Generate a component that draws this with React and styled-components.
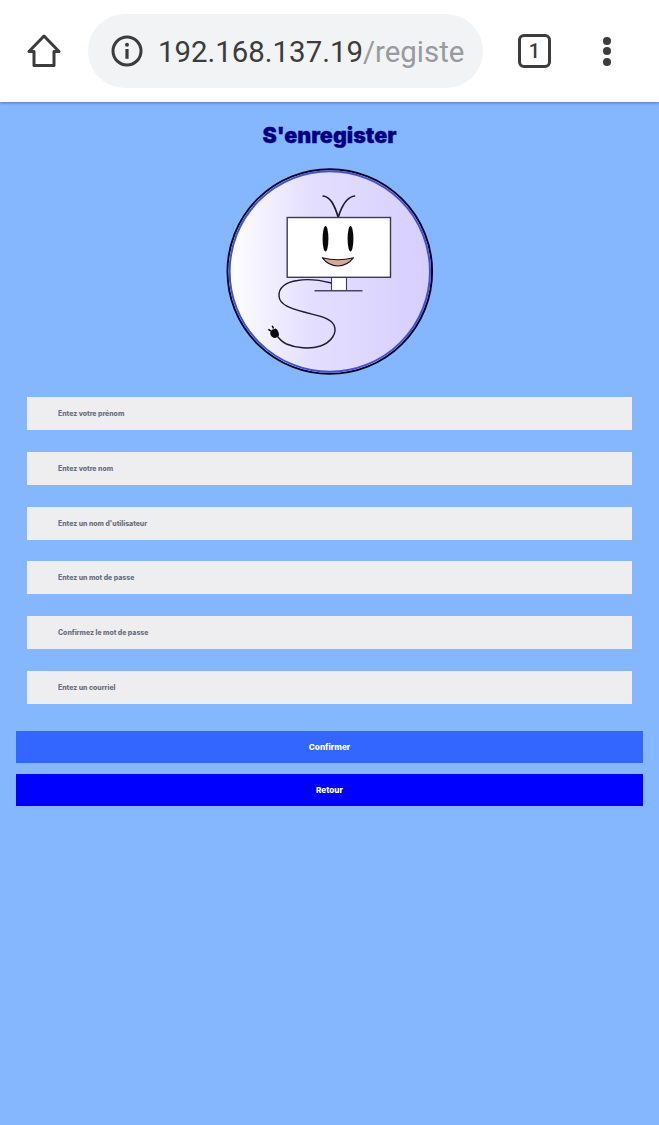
import styled, { createGlobalStyle } from 'styled-components';

const GlobalStyle = createGlobalStyle`
  html, body {
    margin: 0;
    padding: 0;
    background: #84b7ff;
  }
  * {
    box-sizing: border-box;
  }
`;

const fields = [
  "Entez votre prénom",
  'Entez votre nom',
  "Entez un nom d'utilisateur",
  'Entez un mot de passe',
  'Confirmez le mot de passe',
  'Entez un courriel',
];

const Logo = () => (
  <LogoSvg viewBox="10.5 8 208 208" aria-label="logo">
    <defs>
      <linearGradient id="disc" x1="0" y1="0" x2="1" y2="0">
        <stop offset="0" stopColor="#ffffff" />
        <stop offset="0.4" stopColor="#e4dfff" />
        <stop offset="1" stopColor="#d6ceff" />
      </linearGradient>
    </defs>
    <circle cx="114.3" cy="111.5" r="102.300" fill="url(#disc)" stroke="#05051e" strokeWidth="2" />
    <circle cx="114.3" cy="111.5" r="100.200" fill="none" stroke="#3d52d5" strokeWidth="2" />
    <path d="M107.700 36c7 1 11 8 15 21.300c4-13 9-20.300 16.300-21.300" fill="none" stroke="#1a1a2a" strokeWidth="1.700" strokeLinecap="round" />
    <rect x="71.700" y="57.500" width="103.300" height="59.800" fill="#fff" stroke="#3e3a55" strokeWidth="1.400" />
    <rect x="116" y="117.500" width="15" height="13" fill="#fff" stroke="#3e3a55" strokeWidth="1.100" />
    <path d="M99 130.700h48" stroke="#4a4668" strokeWidth="1.600" />
    <ellipse cx="110" cy="78.700" rx="2.900" ry="12.800" fill="#08080c" />
    <ellipse cx="135" cy="78.700" rx="2.900" ry="12.800" fill="#08080c" />
    <path d="M106.700 97.700c10 2.600 21.300 2.600 31.300 0c-4 5.300-9.500 8.300-15.600 8.300s-11.700-3-15.700-8.300z" fill="#d9a894" stroke="#14141c" strokeWidth="1.100" strokeLinejoin="round" />
    <path d="M116 123C104 120 90 119 82 120.500C70 122 63 128 63.500 136C64 146 78 149 92 153C104 156 115 158 118.500 165C122 173 116 182 105 186C94 189.500 80 188 71 184C66 181.500 63 178 61 175" fill="none" stroke="#1c1a2c" strokeWidth="1.400" />
    <path d="M63.500 175.500l-3 2.300c-2.500 .5-4.500-.8-5.500-3c-.8-2 .2-3.800 1.500-5l3.500-1.300c2.300 1 3.500 3.700 3.500 7z" fill="#08080c" />
    <path d="M55.500 171l-2.700-1.700M58 168.500l-1.300-2.800" stroke="#08080c" strokeWidth="1.500" />
  </LogoSvg>
);

const App = () => (
  <Page>
    <GlobalStyle />
    <Toolbar>
      <HomeIcon viewBox="0 0 34 34">
        <path d="M17 2L2 17.500h5v14h20v-14h5z" fill="none" stroke="#3c3c3e" strokeWidth="3" strokeLinejoin="round" />
      </HomeIcon>
      <AddressPill>
        <InfoIcon viewBox="0 0 32 32">
          <circle cx="16" cy="16" r="14" fill="none" stroke="#3c3c3e" strokeWidth="3" />
          <circle cx="16" cy="9.800" r="2" fill="#3c3c3e" />
          <rect x="14.400" y="14" width="3.200" height="9.800" fill="#3c3c3e" />
        </InfoIcon>
        <Url>
          192.168.137.19<UrlPath>/registe</UrlPath>
        </Url>
      </AddressPill>
      <TabCount>1</TabCount>
      <MenuDots>
        <span />
        <span />
        <span />
      </MenuDots>
    </Toolbar>
    <Main>
      <Title>S'enregister</Title>
      <Logo />
      <Form>
        {fields.map((label) => (
          <Field key={label} type="text" placeholder={label} />
        ))}
        <Buttons>
          <Button type="button" $color="#3366ff">Confirmer</Button>
          <Button type="button" $color="#0000ff">Retour</Button>
        </Buttons>
      </Form>
    </Main>
  </Page>
);

export default App;

const Page = styled.div`
  width: 659px;
  min-height: 1125px;
  background: #84b7ff;
  overflow: hidden;
`;

const Toolbar = styled.header`
  height: 102px;
  background: #fff;
  display: flex;
  align-items: center;
  padding: 0 0 0 27px;
  box-shadow: 0 1px 3px rgba(50, 70, 110, 0.55);
  position: relative;
`;

const HomeIcon = styled.svg`
  width: 34px;
  height: 34px;
  flex: none;
`;

const AddressPill = styled.div`
  width: 395px;
  height: 74px;
  margin-left: 27px;
  background: #f1f3f4;
  border-radius: 37px;
  display: flex;
  align-items: center;
  padding-left: 23px;
`;

const InfoIcon = styled.svg`
  width: 32px;
  height: 32px;
  flex: none;
`;

const Url = styled.div`
  margin-left: 15px;
  padding-top: 2px;
  font-family: Roboto, sans-serif;
  font-size: 29.400px;
  color: #3c3c3e;
  white-space: nowrap;
`;

const UrlPath = styled.span`
  color: #9a9a9e;
`;

const TabCount = styled.div`
  width: 33px;
  height: 34px;
  margin-left: 35px;
  border: 3px solid #3c3c3e;
  border-radius: 6px;
  display: flex;
  align-items: center;
  justify-content: center;
  font-family: Roboto, sans-serif;
  font-size: 20px;
  font-weight: 500;
  color: #3c3c3e;
`;

const MenuDots = styled.div`
  margin-left: 52px;
  display: flex;
  flex-direction: column;
  gap: 2.500px;
  span {
    width: 8px;
    height: 8px;
    border-radius: 50%;
    background: #3c3c3e;
  }
`;

const Main = styled.main`
  display: flex;
  flex-direction: column;
  align-items: center;
`;

const Title = styled.h1`
  margin: 21px 0 0;
  height: 25px;
  line-height: 25px;
  font-family: Inter, sans-serif;
  font-size: 21.500px;
  font-weight: 900;
  color: #00007f;
  -webkit-text-stroke: 0.3px #00007f;
`;

const LogoSvg = styled.svg`
  display: block;
  width: 208px;
  height: 208px;
  margin-top: 20px;
`;

const Form = styled.form`
  width: 100%;
  margin-top: 21px;
  display: flex;
  flex-direction: column;
  align-items: center;
  gap: 21.800px;
`;

const Field = styled.input`
  display: block;
  width: 605px;
  height: 33px;
  padding: 0 0 0 31px;
  border: 0;
  border-radius: 0;
  outline: 0;
  background: #eeeef0;
  font-family: Inter, sans-serif;
  font-size: 6.900px;
  font-weight: 800;
  &::placeholder {
    color: #6b7080;
    opacity: 1;
  }
`;

const Buttons = styled.div`
  width: 627px;
  margin-top: 5.200px;
  display: flex;
  flex-direction: column;
  gap: 11px;
`;

const Button = styled.button`
  height: 32px;
  padding: 0;
  border: 0;
  border-radius: 0;
  background: ${({ $color }) => $color};
  color: #fff;
  font-family: Inter, sans-serif;
  font-size: 8.200px;
  font-weight: 800;
`;
